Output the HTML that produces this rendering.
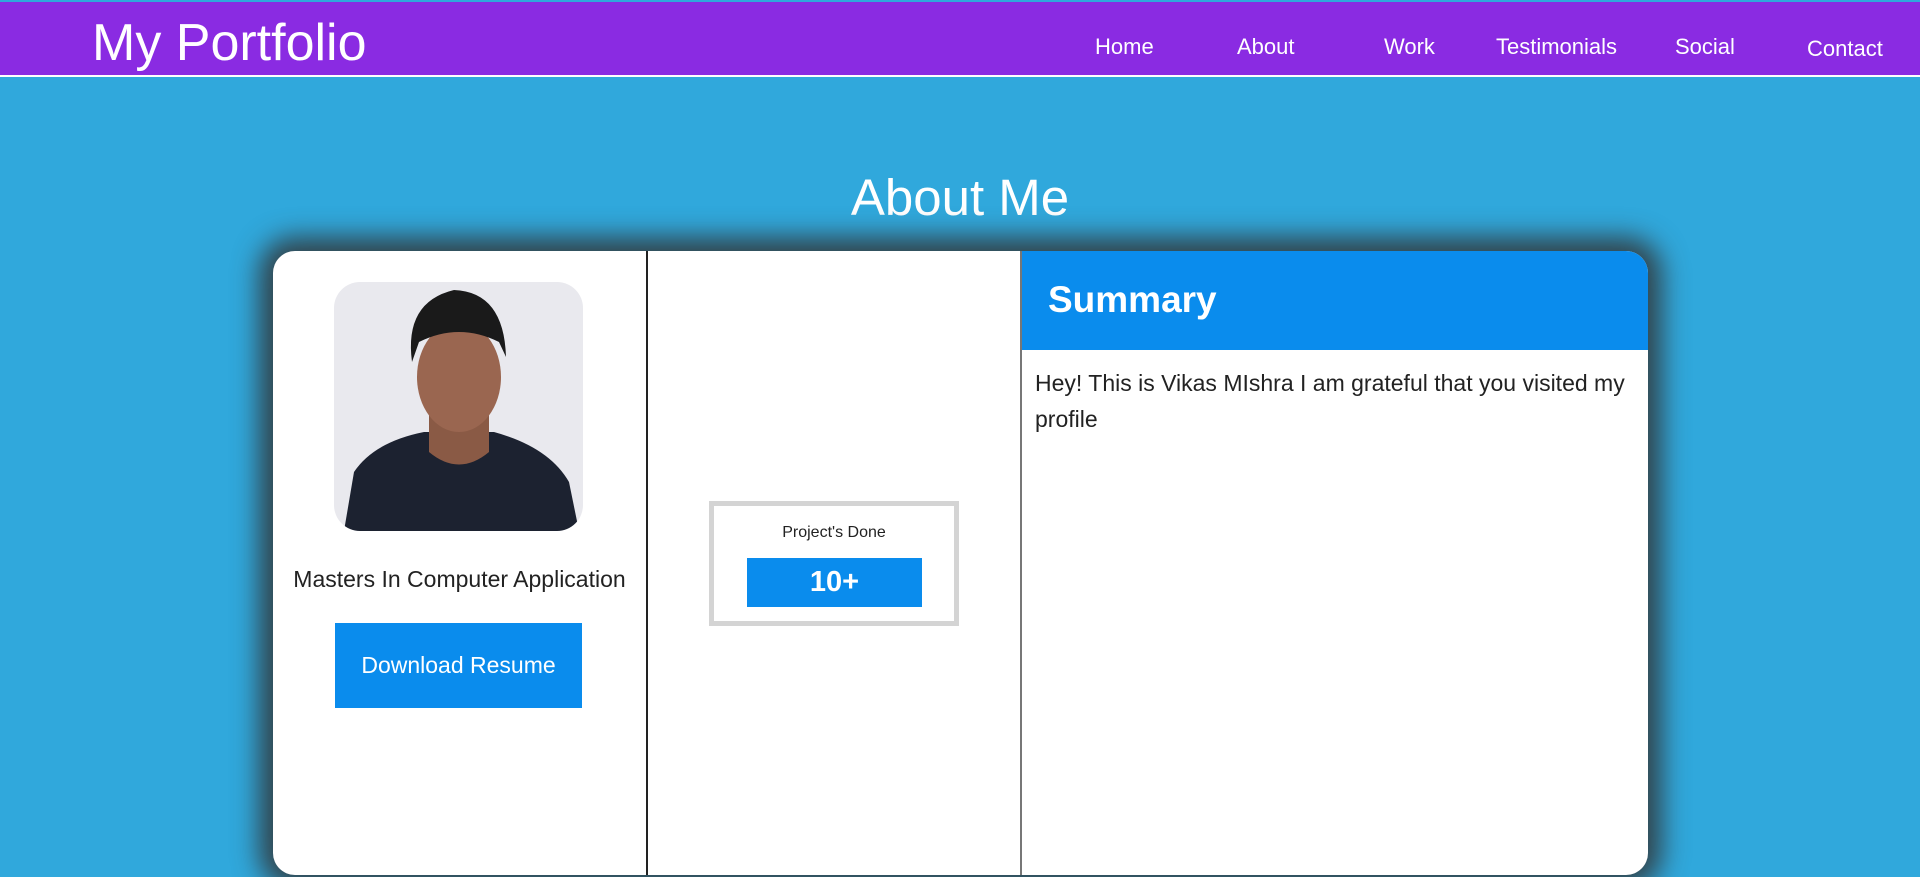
<!DOCTYPE html>
<html><head><meta charset="utf-8"><style>
*{margin:0;padding:0;box-sizing:border-box}
html,body{width:1920px;height:877px;overflow:hidden}
body{background:#30a8dc;font-family:"Liberation Sans",sans-serif;position:relative}
.nav{position:absolute;left:0;top:2px;width:1920px;height:75px;background:#8a2be2;border-bottom:2px solid #fff}
.logo{position:absolute;left:92px;top:11px;color:#fff;font-size:52px}
.nav a{position:absolute;top:32px;color:#fff;font-size:22px;text-decoration:none}
h1{position:absolute;left:0;width:1920px;top:168px;text-align:center;color:#fff;font-weight:normal;font-size:51px}
.card{position:absolute;left:273px;top:251px;width:1375px;height:624px;background:#fff;border-radius:22px;box-shadow:0 0 26px 14px rgba(50,50,50,.85);overflow:hidden}
.div{position:absolute;top:0;bottom:0;width:2px;background:#222}
.photo{position:absolute;left:61px;top:31px;width:249px;height:249px;border-radius:26px;background:#e9e9ee;overflow:hidden}
.t{position:absolute;color:#222}
.btn{position:absolute;left:62px;top:372px;width:247px;height:85px;background:#0a8ced;color:#fff;font-size:23px;text-align:center;line-height:85px}
.pbox{position:absolute;left:436px;top:250px;width:250px;height:125px;border:5px solid #d4d4d4}
.num{position:absolute;left:33px;top:52px;width:175px;height:49px;background:#0a8ced;color:#fff;font-weight:bold;font-size:29px;text-align:center;line-height:49px}
.sum{position:absolute;left:749px;top:0;width:626px;height:99px;background:#0a8ced;color:#fff;font-weight:bold;font-size:37px;padding:28px 0 0 26px}
</style></head><body>
<div class="nav"><div class="logo">My Portfolio</div>
<a style="left:1095px">Home</a><a style="left:1237px">About</a><a style="left:1384px">Work</a><a style="left:1496px">Testimonials</a><a style="left:1675px">Social</a><a style="left:1807px;top:34px">Contact</a></div>
<h1>About Me</h1>
<div class="card">
<div class="div" style="left:373px"></div><div class="div" style="left:747px;background:#777"></div>
<div class="photo"><svg width="249" height="249" viewBox="0 0 249 249">
<path d="M10 249 L20 190 Q40 160 90 150 L160 150 Q215 165 235 200 L245 249Z" fill="#1c2230"/>
<path d="M95 130 L95 170 Q125 195 155 170 L155 130Z" fill="#8a5a45"/>
<ellipse cx="125" cy="95" rx="42" ry="55" fill="#9a6650"/>
<path d="M78 80 Q70 20 120 8 Q170 10 172 75 L165 60 Q125 40 85 60Z" fill="#1a1a1a"/>
</svg></div>
<div class="t" style="left:0;width:373px;top:315px;text-align:center;font-size:23px">Masters In Computer Application</div>
<div class="btn">Download Resume</div>
<div class="pbox"><div class="t" style="left:0;width:240px;top:18px;text-align:center;font-size:16px">Project's Done</div><div class="num">10+</div></div>
<div class="sum">Summary</div>
<div class="t" style="left:762px;top:114px;width:612px;font-size:23px;line-height:36px">Hey! This is Vikas MIshra I am grateful that you visited my profile</div>
</div>
</body></html>
